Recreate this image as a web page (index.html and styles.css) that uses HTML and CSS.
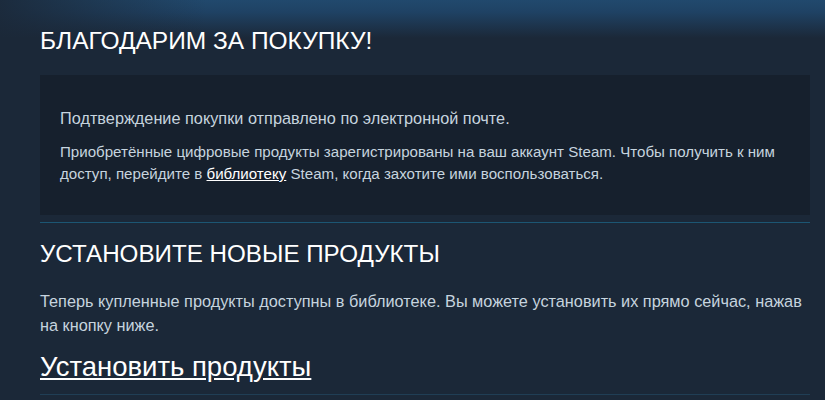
FILE: index.html
```html
<!DOCTYPE html>
<html lang="ru">
<head>
    <meta charset="UTF-8">
    <title>Спасибо за покупку</title>
    <link rel="stylesheet" href="styles.css">
</head>
<body>
    <div class="page">
        <h1 class="title">БЛАГОДАРИМ ЗА ПОКУПКУ!</h1>
        <div class="receipt">
            <p class="receipt-note">Подтверждение покупки отправлено по электронной почте.</p>
            <p class="receipt-info">Приобретённые цифровые продукты зарегистрированы на ваш аккаунт Steam. Чтобы получить к ним доступ, перейдите в <a href="#">библиотеку</a> Steam, когда захотите ими воспользоваться.</p>
        </div>
        <div class="install">
            <h2>УСТАНОВИТЕ НОВЫЕ ПРОДУКТЫ</h2>
            <p>Теперь купленные продукты доступны в библиотеке. Вы можете установить их прямо сейчас, нажав на кнопку ниже.</p>
            <a class="install-link" href="#">Установить продукты</a>
        </div>
    </div>
</body>
</html>
```

FILE: styles.css
```css
body { margin: 0; font-family: Arial, "Liberation Sans", sans-serif; color: #c6d4df; background: #1b2838; }
.page { min-height: 400px; padding: 0 15px 0 40px; background: linear-gradient(90deg, rgba(27,40,56,0.9) 0%, rgba(27,40,56,0) 25%), linear-gradient(180deg, #21496d 0%, #1f4264 12px, #1b2838 38px, #1b2838 100%); }
.title { margin: 0; padding-top: 29px; height: 46px; font-weight: normal; font-size: 24.5px; line-height: 24px; color: #fff; }
.receipt { background: #16202d; padding: 32px 20px 30px; border-bottom: 1px solid #1b2838; }
.receipt p { margin: 0; line-height: 22px; }
.receipt-note { font-size: 16.3px; }
.receipt-info { margin-top: 12px !important; font-size: 15.1px; }
.receipt a { color: #fff; }
.install { margin-top: 6px; border-top: 1px solid #1c5673; border-bottom: 1px solid #203e55; }
.install h2 { margin: 0; padding-top: 16px; font-weight: normal; font-size: 24.2px; line-height: 30px; color: #fff; }
.install p { margin: 20px 0 0; font-size: 16.3px; line-height: 24px; }
.install-link { display: block; margin-top: 14px; padding-bottom: 12px; font-size: 27.5px; line-height: 31px; color: #fff; }
```
